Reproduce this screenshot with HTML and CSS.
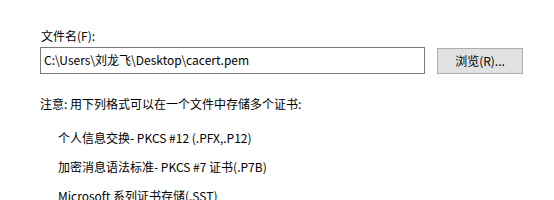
FILE: index.html
```html
<!DOCTYPE html>
<html lang="zh-CN">
<head>
<meta charset="utf-8">
<link rel="stylesheet" href="styles.css">
</head>
<body>
<div class="panel">
  <div class="label">文件名(F):</div>
  <div class="row">
    <div class="field">C:\Users\刘龙飞\Desktop\cacert.pem</div>
    <div class="button">浏览(R)...</div>
  </div>
  <div class="note">注意: 用下列格式可以在一个文件中存储多个证书:</div>
  <div class="list">
    <div class="item">个人信息交换- PKCS #12 (.PFX,.P12)</div>
    <div class="item">加密消息语法标准- PKCS #7 证书(.P7B)</div>
    <div class="item">Microsoft 系列证书存储(.SST)</div>
  </div>
</div>
</body>
</html>
```
FILE: styles.css
```css
html, body {
  margin: 0;
  padding: 0;
  background: #ffffff;
}
.panel {
  padding: 28px 0 0 40px;
  font-family: "Noto Sans CJK SC", sans-serif;
  font-size: 12px;
  line-height: 16px;
  color: #000000;
}
.label {
  padding-left: 1px;
}
.row {
  display: flex;
  align-items: flex-start;
  margin-top: 3px;
}
.field {
  box-sizing: border-box;
  width: 385px;
  height: 27px;
  border: 1px solid #7a7a7a;
  padding: 4px 3px;
  white-space: nowrap;
}
.button {
  box-sizing: border-box;
  width: 86px;
  height: 26px;
  margin-left: 12px;
  margin-top: 1px;
  border: 1px solid #adadad;
  background: #e1e1e1;
  display: flex;
  align-items: center;
  justify-content: center;
}
.note {
  margin-top: 22px;
}
.list {
  display: flex;
  flex-direction: column;
  gap: 13px;
  margin-top: 18px;
  padding-left: 18px;
}
```
